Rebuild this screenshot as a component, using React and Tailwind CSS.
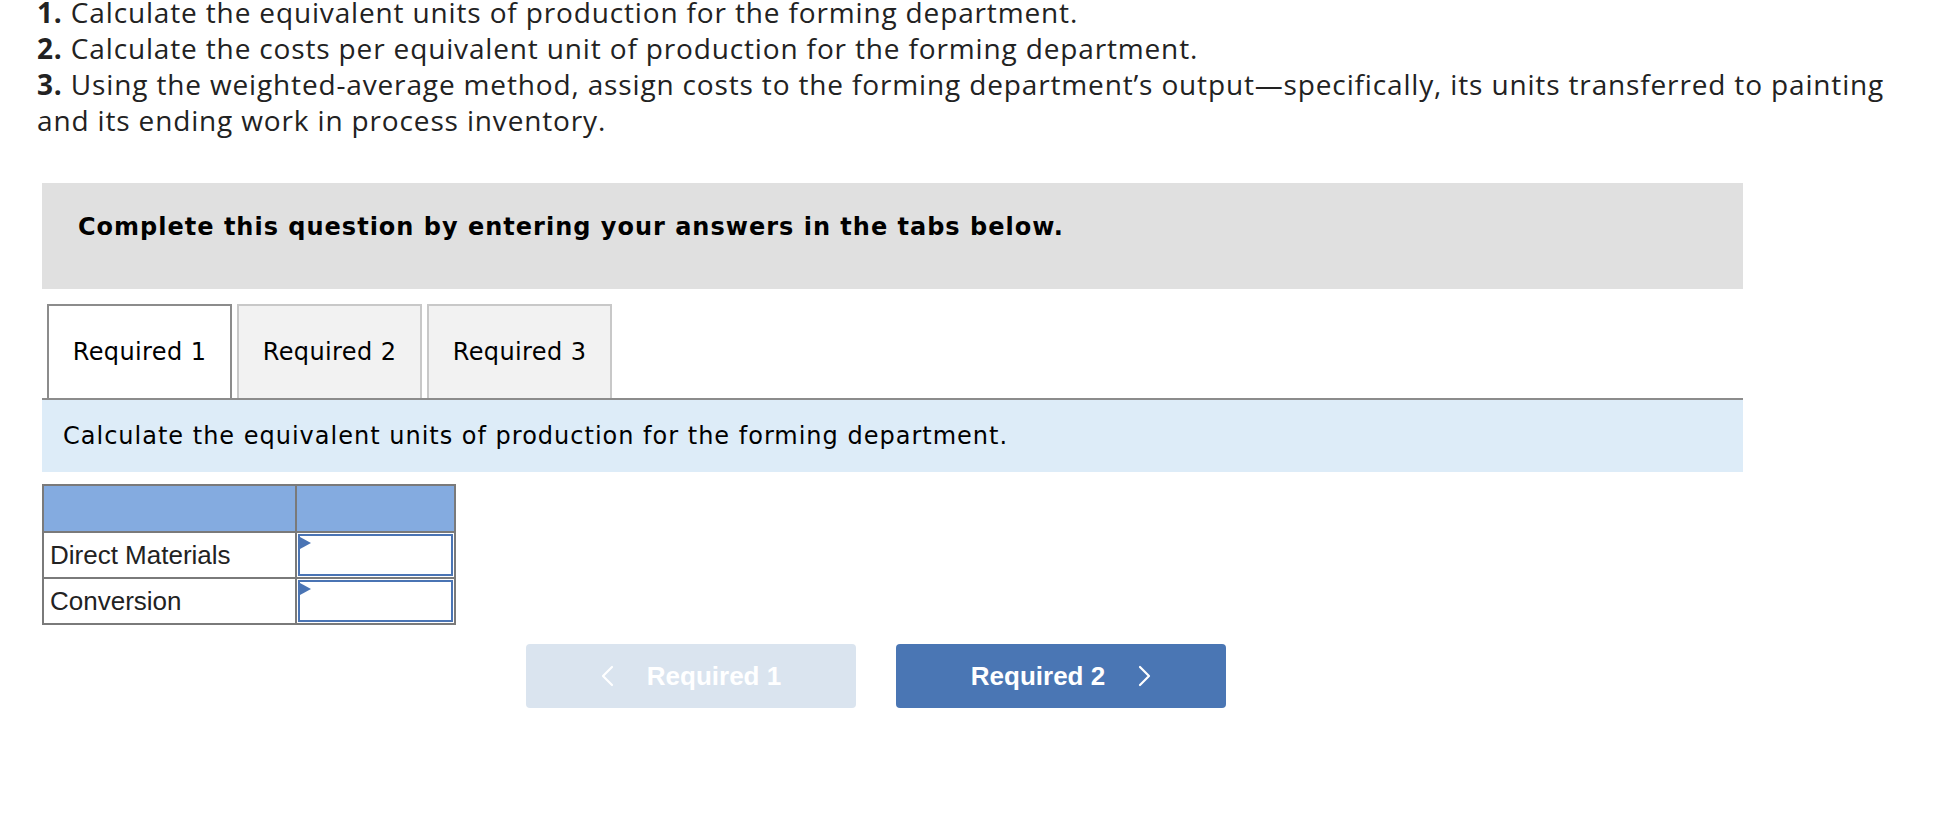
import React from 'react';

const verdana = "font-['DejaVu_Sans',Verdana,sans-serif]";
const arial = "font-['Liberation_Sans',Arial,sans-serif]";

const Tab = ({ label, active }) => (
  <div
    className={
      'w-[185px] h-[94px] flex items-center justify-center border-2 border-b-0 text-[24px] tracking-[0.4px] text-black ' +
      verdana +
      (active ? ' bg-white border-[#8c8c8c]' : ' bg-[#f2f2f2] border-[#c8c8c8]')
    }
  >
    {label}
  </div>
);

const InputCell = () => (
  <div className="bg-white p-px h-full">
    <div className="relative h-full border-2 border-[#4a74b4]">
      <div className="absolute left-0 top-[1px] w-0 h-0 border-t-[6px] border-b-[6px] border-l-[11px] border-t-transparent border-b-transparent border-l-[#4a74b4]" />
    </div>
  </div>
);

const Chevron = ({ dir }) => (
  <svg width="13" height="22" viewBox="0 0 13 22" fill="none">
    <polyline
      points={dir === 'left' ? '11,2 2,11 11,20' : '2,2 11,11 2,20'}
      stroke="white"
      strokeWidth="2.2"
      strokeLinecap="round"
      strokeLinejoin="round"
    />
  </svg>
);

export default function App() {
  return (
    <div className="w-[1936px] h-[838px] overflow-hidden bg-white">
      <div className="pl-[37px] pt-[2px] text-[28px] leading-[36px] tracking-[0.85px] text-[#222] font-['Open_Sans',sans-serif] whitespace-nowrap">
        <div className="mt-[-8px]"><span className="font-bold">1.</span> Calculate the equivalent units of production for the forming department.</div>
        <div><span className="font-bold">2.</span> Calculate the costs per equivalent unit of production for the forming department.</div>
        <div><span className="font-bold">3.</span> Using the weighted-average method, assign costs to the forming department’s output—specifically, its units transferred to painting</div>
        <div>and its ending work in process inventory.</div>
      </div>

      <div className="ml-[42px] w-[1701px] mt-[45px]">
        <div className={'h-[106px] bg-[#e0e0e0] pl-[36px] pt-[29px] text-[24px] tracking-[1px] leading-[30px] font-bold text-black ' + verdana}>
          Complete this question by entering your answers in the tabs below.
        </div>

        <div className="mt-[15px] pl-[5px] flex gap-[5px]">
          <Tab label="Required 1" active />
          <Tab label="Required 2" />
          <Tab label="Required 3" />
        </div>
        <div className="h-[2px] bg-[#8c8c8c]" />
        <div className={'h-[72px] bg-[#ddecf8] pl-[21px] flex items-center text-[24px] tracking-[1px] text-black ' + verdana}>
          Calculate the equivalent units of production for the forming department.
        </div>

        <div className={'mt-[12px] w-[414px] grid grid-cols-[251px_157px] grid-rows-[45px_44px_44px] gap-[2px] p-[2px] bg-[#7a7a7a] text-[26px] text-[#222] ' + arial}>
          <div className="bg-[#84abe0]" />
          <div className="bg-[#84abe0]" />
          <div className="bg-white flex items-center pl-[6px]">Direct Materials</div>
          <InputCell />
          <div className="bg-white flex items-center pl-[6px]">Conversion</div>
          <InputCell />
        </div>

        <div className={'mt-[19px] ml-[484px] flex gap-[40px] text-[26px] font-bold text-white ' + arial}>
          <button className="w-[330px] h-[64px] rounded-[4px] bg-[#dae4ef] flex items-center justify-center gap-[33px]">
            <Chevron dir="left" />
            <span>Required 1</span>
          </button>
          <button className="w-[330px] h-[64px] rounded-[4px] bg-[#4a76b4] flex items-center justify-center gap-[33px]">
            <span>Required 2</span>
            <Chevron dir="right" />
          </button>
        </div>
      </div>
    </div>
  );
}
